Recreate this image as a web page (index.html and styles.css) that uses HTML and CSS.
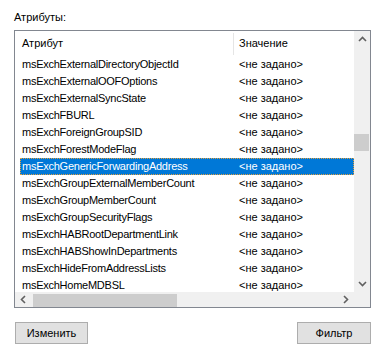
FILE: index.html
```html
<!DOCTYPE html>
<html lang="ru">
<head>
<meta charset="utf-8">
<link rel="stylesheet" href="styles.css">
</head>
<body>
<div class="dialog">
  <div class="label">Атрибуты:</div>
  <div class="listbox">
    <div class="view">
      <div class="header">
        <div class="hcell c1">Атрибут</div>
        <div class="hcell c2">Значение</div>
      </div>
      <div class="rows">
        <div class="row"><span class="c1">msExchExternalDirectoryObjectId</span><span class="c2">&lt;не задано&gt;</span></div>
        <div class="row"><span class="c1">msExchExternalOOFOptions</span><span class="c2">&lt;не задано&gt;</span></div>
        <div class="row"><span class="c1">msExchExternalSyncState</span><span class="c2">&lt;не задано&gt;</span></div>
        <div class="row"><span class="c1">msExchFBURL</span><span class="c2">&lt;не задано&gt;</span></div>
        <div class="row"><span class="c1">msExchForeignGroupSID</span><span class="c2">&lt;не задано&gt;</span></div>
        <div class="row"><span class="c1">msExchForestModeFlag</span><span class="c2">&lt;не задано&gt;</span></div>
        <div class="row selected"><span class="c1">msExchGenericForwardingAddress</span><span class="c2">&lt;не задано&gt;</span></div>
        <div class="row"><span class="c1">msExchGroupExternalMemberCount</span><span class="c2">&lt;не задано&gt;</span></div>
        <div class="row"><span class="c1">msExchGroupMemberCount</span><span class="c2">&lt;не задано&gt;</span></div>
        <div class="row"><span class="c1">msExchGroupSecurityFlags</span><span class="c2">&lt;не задано&gt;</span></div>
        <div class="row"><span class="c1">msExchHABRootDepartmentLink</span><span class="c2">&lt;не задано&gt;</span></div>
        <div class="row"><span class="c1">msExchHABShowInDepartments</span><span class="c2">&lt;не задано&gt;</span></div>
        <div class="row"><span class="c1">msExchHideFromAddressLists</span><span class="c2">&lt;не задано&gt;</span></div>
        <div class="row"><span class="c1">msExchHomeMDBSL</span><span class="c2">&lt;не задано&gt;</span></div>
      </div>
    </div>
    <div class="vscroll">
      <svg class="arrow" width="17" height="17" viewBox="0 0 17 17"><path d="M5 10 L8.5 6.5 L12 10" fill="none" stroke="#606060" stroke-width="1.6"/></svg>
      <div class="vtrack"><div class="vthumb"></div></div>
      <svg class="arrow" width="17" height="17" viewBox="0 0 17 17"><path d="M5 7 L8.5 10.5 L12 7" fill="none" stroke="#606060" stroke-width="1.6"/></svg>
    </div>
    <div class="hscroll">
      <svg class="arrow" width="17" height="15" viewBox="0 0 17 15"><path d="M10 4 L6.5 7.5 L10 11" fill="none" stroke="#606060" stroke-width="1.6"/></svg>
      <div class="htrack"><div class="hthumb"></div></div>
      <svg class="arrow" width="17" height="15" viewBox="0 0 17 15"><path d="M7 4 L10.5 7.5 L7 11" fill="none" stroke="#606060" stroke-width="1.6"/></svg>
    </div>
    <div class="corner"></div>
  </div>
  <div class="buttons">
    <button class="btn">Изменить</button>
    <button class="btn">Фильтр</button>
  </div>
</div>
</body>
</html>
```

FILE: styles.css
```css
html, body {
  margin: 0;
  padding: 0;
  background: #ffffff;
}
body {
  font-family: "Liberation Sans", Arial, sans-serif;
  font-size: 11px;
  color: #000000;
}
.dialog {
  padding: 11px 10px 0 14px;
  width: 357px;
}
.label {
  height: 19px;
  line-height: 13px;
}
.listbox {
  border: 1px solid #828790;
  height: 276px;
  display: grid;
  grid-template-columns: 1fr 16px;
  grid-template-rows: 1fr 15px;
}
.view {
  overflow: hidden;
  background: #fff;
}
.header {
  height: 25px;
  display: flex;
  align-items: flex-start;
}
.hcell {
  height: 22px;
  line-height: 20px;
  padding-top: 2px;
}
.header .c1 {
  width: 211px;
  padding-left: 7px;
}
.header .c2 {
  border-left: 1px solid #e5e5e5;
  padding-left: 5px;
  padding-top: 0;
  margin-top: 2px;
  height: 22px;
  line-height: 20px;
}
.rows {
  padding-left: 5px;
}
.row {
  height: 17px;
  line-height: 15px;
  display: flex;
  box-sizing: border-box;
  border: 1px solid transparent;
  letter-spacing: -0.25px;
}
.row .c1 {
  width: 211px;
  padding-left: 1px;
  white-space: nowrap;
}
.row .c2 {
  padding-left: 6px;
  white-space: nowrap;
  letter-spacing: 0;
}
.row.selected {
  background: #0078d7;
  color: #ffffff;
  border: 1px dotted #e0a040;
}
.vscroll {
  background: #f0f0f0;
  display: flex;
  flex-direction: column;
}
.arrow {
  display: block;
  flex: none;
}
.vtrack {
  flex: 1;
}
.vthumb {
  margin-top: 86px;
  height: 17px;
  background: #cdcdcd;
  margin-right: 1px;
}
.hscroll {
  background: #f0f0f0;
  display: flex;
  align-items: center;
}
.htrack {
  flex: 1;
  height: 15px;
  display: flex;
  align-items: flex-end;
}
.hthumb {
  margin-left: 1px;
  width: 144px;
  height: 13px;
  background: #cdcdcd;
}
.corner {
  background: #f0f0f0;
}
.buttons {
  display: flex;
  justify-content: space-between;
  padding: 14px 0 0 1px;
}
.btn {
  font-family: "Liberation Sans", Arial, sans-serif;
  font-size: 11px;
  color: #000;
  background: #e1e1e1;
  border: 1px solid #adadad;
  height: 22px;
  width: 73px;
  padding: 0;
  margin: 0;
}
.btn + .btn {
  width: 74px;
}
```
